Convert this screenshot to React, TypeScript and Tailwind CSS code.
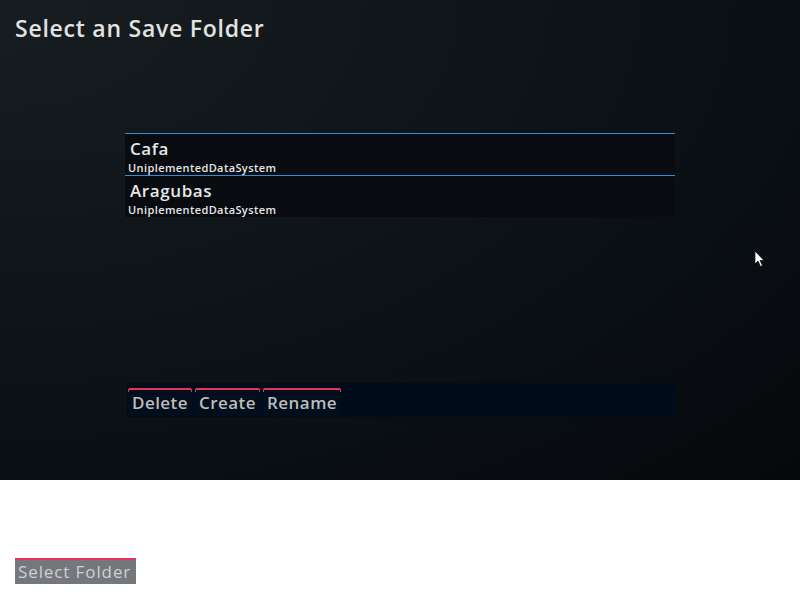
import React from "react";

const folders = [
  { name: "Cafa", system: "UniplementedDataSystem" },
  { name: "Aragubas", system: "UniplementedDataSystem" },
];

const actions = ["Delete", "Create", "Rename"];

const Cursor = () => (
  <svg width="12" height="18" viewBox="0 0 12 18" className="absolute left-[754px] top-[250px]">
    <path d="M1 1 L1 14 L4 11 L6.5 16.5 L8.5 15.5 L6 10.5 L10 10.5 Z" fill="#ffffff" stroke="#111" strokeWidth="0.8" />
  </svg>
);

export default function App() {
  return (
    <div className="w-[800px] h-[600px] flex flex-col bg-white font-['Open_Sans',sans-serif]">
      {/* Dark panel */}
      <div className="relative h-[480px] flex flex-col bg-[radial-gradient(ellipse_at_top_left,#181d22_0%,#0d1217_55%,#05090c_100%)]">
        <h1 className="pl-[15px] pt-[14px] text-[23px] leading-[28px] font-semibold text-[#e2e2e2] tracking-[0.75px]">
          Select an Save Folder
        </h1>

        {/* Folder list */}
        <div className="ml-[125px] mt-[91px] w-[550px] flex flex-col">
          {folders.map((f) => (
            <div key={f.name} className="h-[42px] border-t border-[#2b8fd9] bg-[#080c10] flex flex-col">
              <span className="pl-[5px] pt-[3px] text-[17px] leading-[23px] font-semibold text-[#e6e6e6] tracking-[0.6px]">
                {f.name}
              </span>
              <span className="pl-[3px] pt-[1px] text-[11px] leading-[13px] font-semibold text-[#e6e6e6] tracking-[0.4px]">
                {f.system}
              </span>
            </div>
          ))}
        </div>

        {/* Action bar */}
        <div className="ml-[127px] mt-[166px] w-[548px] h-[34px] bg-[#010c1a] flex gap-[3px] pl-[1px] pt-[5px]">
          {actions.map((a) => (
            <button key={a} className="h-[28px] flex flex-col bg-[#020e1c]">
              <div className="h-[4px] border-t-2 border-x border-[#e8325e] rounded-t-[2px]" />
              <span className="px-[4px] text-[17px] leading-[22px] font-semibold text-[#bdbdbd] tracking-[0.45px]">
                {a}
              </span>
            </button>
          ))}
        </div>

        <Cursor />
      </div>

      {/* Bottom area */}
      <div className="flex-1 flex flex-col justify-end pb-[16px] pl-[15px]">
        <button className="w-[121px] h-[26px] border-t-2 border-[#e8325e] bg-[#74777c] text-[17px] leading-[22px] text-[#d0d0d0] tracking-[0.9px] text-left pl-[3px]">
          Select Folder
        </button>
      </div>
    </div>
  );
}
